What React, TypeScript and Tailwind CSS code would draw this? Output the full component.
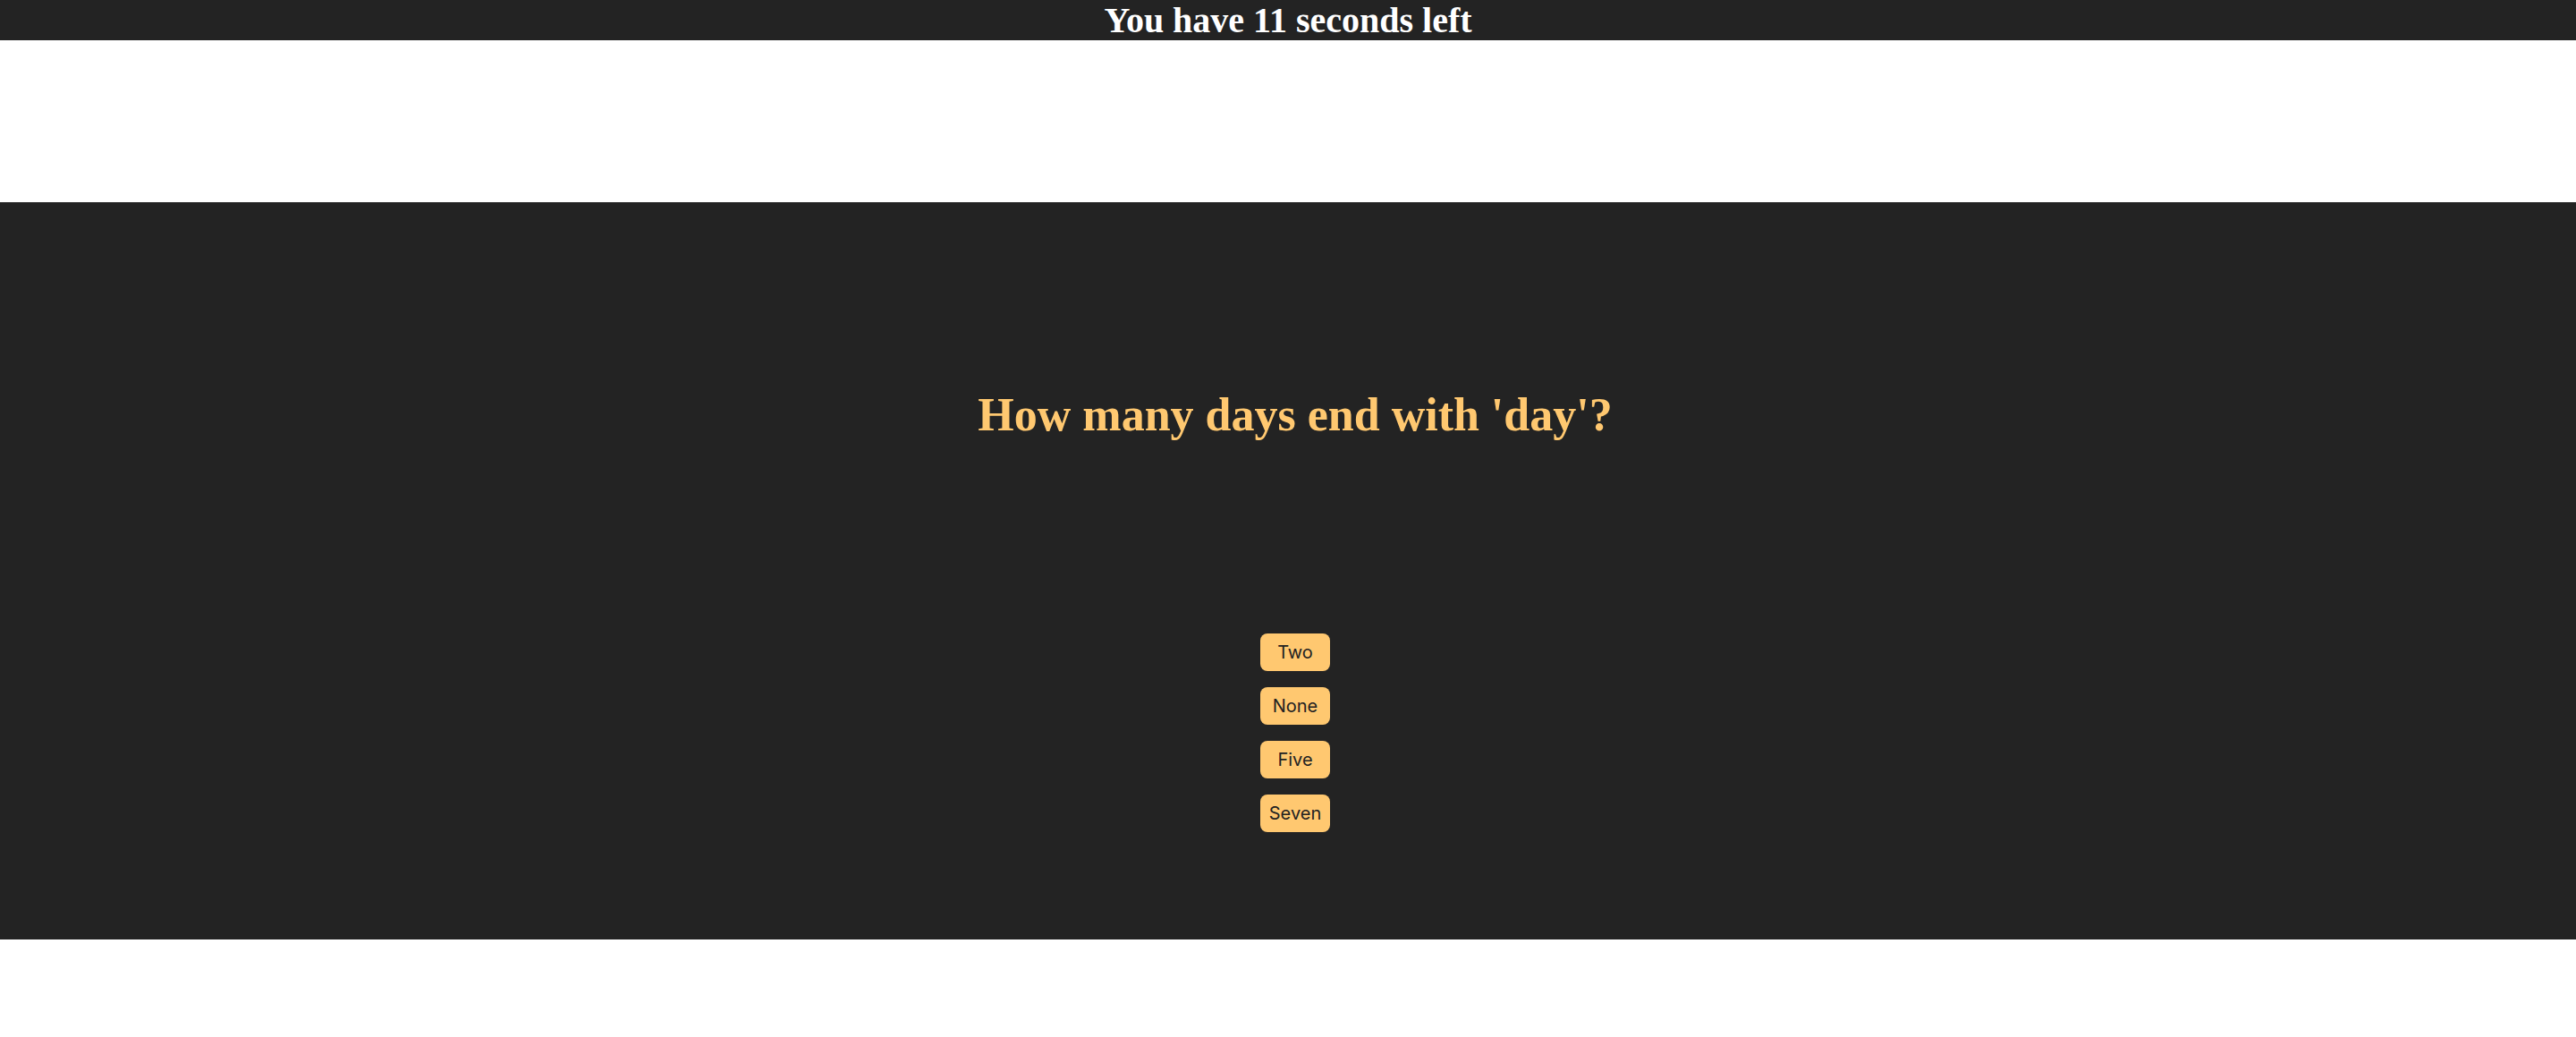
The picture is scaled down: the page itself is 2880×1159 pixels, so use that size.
import React from 'react';

const answers = ['Two', 'None', 'Five', 'Seven'];

export default function App() {
  return (
    <div className="min-h-[1159px] bg-white">
      {/* Timer */}
      <div className="h-[45px] bg-[#232323] text-center">
        <h1 className="text-[40px] leading-[45px] font-bold text-white font-['Liberation_Serif',serif]">
          You have 11 seconds left
        </h1>
      </div>

      <div className="h-[181px]" />

      {/* Quiz */}
      <div className="h-[824px] bg-[#232323] pl-[16px] flex flex-col items-center">
        <h2 className="mt-[212px] text-[52px] leading-[52px] font-bold text-[#ffc870] font-['Liberation_Serif',serif] whitespace-nowrap">
          How many days end with 'day'?
        </h2>
        <div className="mt-[218px] flex flex-col gap-[18px]">
          {answers.map((a) => (
            <button
              key={a}
              className="w-[78px] h-[42px] rounded-[8px] bg-[#ffc870] text-[#222] text-[20px] font-['Inter',sans-serif]"
            >
              {a}
            </button>
          ))}
        </div>
      </div>
    </div>
  );
}
